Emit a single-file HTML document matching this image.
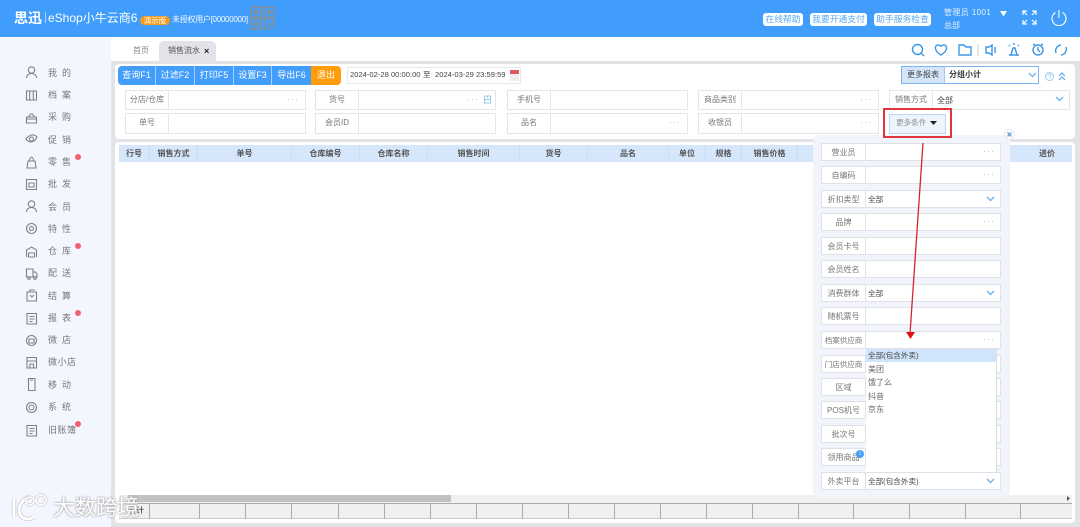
<!DOCTYPE html>
<html><head><meta charset="utf-8"><style>
*{margin:0;padding:0;box-sizing:border-box}
html,body{width:1080px;height:527px;overflow:hidden;background:#e2e3e6}
body{position:relative;font-family:"Liberation Sans","Noto Sans CJK SC",sans-serif;font-size:8px;color:#666;filter:blur(.35px)}
div,span.a,svg{position:absolute}
.t{white-space:nowrap;line-height:12px}
.c{text-align:center}
.nav{left:48px;color:#777;font-size:9px;letter-spacing:5px;white-space:nowrap;line-height:12px}
.dot{width:6px;height:6px;border-radius:50%;background:#f0626f}
.ic{left:24px;width:15px;height:15px;fill:none;stroke:#808088;stroke-width:1.1}
.b{top:66px;height:19px;color:#fff;font-size:9px;line-height:19px;text-align:center;background:#429dfb;border-right:1px solid #a6cff8}
.f{height:20px;background:#fff;border:1px solid #e3e5e8}
.f .l{left:0;top:0;bottom:0;width:43px;border-right:1px solid #e3e5e8;text-align:center;line-height:18px;color:#777}
.f .v{left:47px;top:0;line-height:19px;color:#444}
.f .d{right:6px;top:0;line-height:17px;color:#9cc9e8;font-size:9px;letter-spacing:1px}
.ch{right:5px;top:5px;width:9px;height:6px;fill:none;stroke:#72b7ee;stroke-width:1.5}
.h{top:145px;height:17px;line-height:17px;font-size:8px;font-weight:bold;color:#555;text-align:center;border-right:1px solid #c9dcf5}
.g{left:821px;width:180px;height:18px;background:#fff;border:1px solid #dfe1e8}
.g .l{left:0;top:0;bottom:0;width:44px;border-right:1px solid #dfe1e8;text-align:center;line-height:17px;color:#777;white-space:nowrap}
.g .v{left:46px;top:0;line-height:17px;color:#444;font-size:7.6px;white-space:nowrap}
.g .d{right:5px;top:0;line-height:15px;color:#9cc9e8;font-size:9px;letter-spacing:1px}
.q{fill:none;stroke:#3e97e6;stroke-width:1.4}
.ft{top:504px;height:15px;border-right:1px solid #aaa}
</style></head><body>
<div style="left:0;top:0;width:1080px;height:37px;background:#419dfb"></div>
<div class="t" style="left:14px;top:10px;color:#fff;font-size:14px;font-weight:bold;line-height:16px">思迅</div>
<div style="left:45px;top:12px;width:1px;height:11px;background:#a9d2fb"></div>
<div class="t" style="left:48px;top:10px;color:#fff;font-size:12px;line-height:16px">eShop小牛云商6</div>
<div class="t c" style="left:140px;top:16px;width:30px;height:9px;border-radius:5px;background:#f49a1c;color:#fff;font-size:7.500px;line-height:9px">演示版</div>
<div class="t" style="left:172px;top:14px;color:#f0f7ff;font-size:8px;letter-spacing:-.28px">未授权用户[00000000]</div>
<svg style="left:250px;top:6px" width="25" height="24" fill="none" stroke="#84929a" stroke-width="1.6"><rect x="1" y="1" width="10" height="10"/><rect x="14" y="1" width="10" height="10"/><rect x="1" y="13" width="10" height="10"/><path d="M14 13h10v5h-5v5h-5zM24 20v3"/><rect x="4.500" y="4.500" width="3" height="3" fill="#84929a"/><rect x="17.500" y="4.500" width="3" height="3" fill="#84929a"/><rect x="4.500" y="16.500" width="3" height="3" fill="#84929a"/></svg>
<div class="t c" style="left:763px;top:13px;width:40px;height:13px;background:#fff;border-radius:3px;color:#5aaaf5;font-size:8.800px;line-height:13px">在线帮助</div>
<div class="t c" style="left:810px;top:13px;width:57px;height:13px;background:#fff;border-radius:3px;color:#5aaaf5;font-size:8.800px;line-height:13px">我要开通支付</div>
<div class="t c" style="left:874px;top:13px;width:57px;height:13px;background:#fff;border-radius:3px;color:#5aaaf5;font-size:8.800px;line-height:13px">助手服务检查</div>
<div class="t" style="left:944px;top:7px;color:#e6f2ff;font-size:8px;letter-spacing:.4px">管理员 1001</div>
<div class="t" style="left:944px;top:20px;color:#e6f2ff;font-size:8px">总部</div>
<svg style="left:999px;top:10px" width="9" height="7"><path d="M1 1h7L4.500 6.500z" fill="#fff"/></svg>
<svg style="left:1022px;top:10px" width="15" height="15" fill="none" stroke="#fff" stroke-width="1.2"><path d="M1 5V1h4M1 1l4 4M10 1h4v4M14 1l-4 4M1 10v4h4M1 14l4-4M14 10v4h-4M14 14l-4-4"/></svg>
<svg style="left:1051px;top:9px" width="16" height="17" fill="none" stroke="#fff" stroke-width="1.1"><path d="M4.500 3.500A7 7 0 1 0 11.500 3.500M8 1v8"/></svg>

<div style="left:0;top:37px;width:111px;height:490px;background:#f4f6ff"></div>
<div style="left:111px;top:37px;width:969px;height:24px;background:#fff"></div>
<div class="t c" style="left:130px;top:45px;width:22px;color:#888">首页</div>
<div style="left:159px;top:41px;width:57px;height:20px;background:#e2e3e8;border-radius:5px 5px 0 0"></div>
<div class="t" style="left:168px;top:45px;color:#555">销售流水</div>
<div class="t" style="left:204px;top:45px;color:#222;font-size:9px;font-weight:bold">×</div>
<svg style="left:910px;top:42px" width="160" height="16"><g class="q"><circle cx="7.500" cy="7.500" r="5"/><path d="M11 11l3 3"/><path d="M31 13c-8-5-6-10-3-10 2 0 3 1 3 2 0-1 1-2 3-2 3 0 5 5-3 10z"/><path d="M49 13V3h5l2 2h5v8z"/><path d="M76 5h3l3-2v10l-3-2h-3zM85 5v6"/><path d="M99 13h10M101 13l2-7h2l2 7M104 1v2M99 3l1 1M109 3l-1 1"/><circle cx="128" cy="8" r="5"/><path d="M128 5v3l2 2M123 3l2-1M133 3l-2-1"/><path d="M146 11a6 6 0 0 1 5-8M156 5a6 6 0 0 1-5 8"/></g><path d="M68 2v12" stroke="#ccc" fill="none"/></svg>

<div style="left:115px;top:64px;width:960px;height:75px;background:#fff;border-radius:4px"></div>
<div style="left:115px;top:142px;width:960px;height:381px;background:#fff;border-radius:4px"></div>
<div class="b" style="left:118px;width:38px;border-radius:4px 0 0 4px">查询F1</div>
<div class="b" style="left:156px;width:39px">过滤F2</div>
<div class="b" style="left:195px;width:39px">打印F5</div>
<div class="b" style="left:234px;width:38px">设置F3</div>
<div class="b" style="left:272px;width:39px;border:0">导出F6</div>
<div class="b" style="left:311px;width:30px;background:#ff9d0b;border:0;border-radius:0 4px 4px 0">退出</div>
<div style="left:347px;top:67px;width:174px;height:17px;border:1px solid #e6e8ea"></div>
<div class="t" style="left:350px;top:69px;color:#444;font-size:7.600px">2024-02-28 00:00:00</div>
<div class="t" style="left:423px;top:69px;color:#444;font-size:7.600px">至</div>
<div class="t" style="left:435px;top:69px;color:#444;font-size:7.600px">2024-03-29 23:59:59</div>
<div style="left:510px;top:70px;width:9px;height:11px;background:#eee;border-top:4px solid #e25757"></div>

<div style="left:901px;top:66px;width:138px;height:18px;border:1px solid #7fb5ef;background:#fff"></div>
<div class="t c" style="left:902px;top:67px;width:43px;height:16px;background:#d5e6fb;line-height:16px;border-right:1px solid #a8c8ee;color:#444">更多报表</div>
<div class="t" style="left:949px;top:69px;color:#333;font-weight:bold">分组小计</div>
<svg style="left:1028px;top:72px" width="9" height="6" fill="none" stroke="#72b7ee" stroke-width="1.4"><path d="M1 1l3.500 3.500L8 1"/></svg>
<svg style="left:1044px;top:71px" width="24" height="11" fill="none" stroke="#9cc9ee"><circle cx="5.500" cy="5.500" r="4"/><path d="M4 4.500c0-2 3-2 3 0 0 1-1.500 1-1.500 2.500" stroke-width=".8"/><path d="M15 5l3-3 3 3M15 9l3-3 3 3" stroke="#62a9e8" stroke-width="1.2"/></svg>

<div class="f" style="left:125px;top:90px;width:181px"><div class="l">分店/仓库</div><div class="d">···</div></div>
<div class="f" style="left:315px;top:90px;width:181px"><div class="l">货号</div><div class="d" style="right:16px">···</div><svg style="left:167px;top:4px" width="9" height="9" fill="none" stroke="#9cc9e8"><path d="M1.500 1h6v7h-6zM1.500 4.500h6M4.500 1v2"/></svg></div>
<div class="f" style="left:507px;top:90px;width:181px"><div class="l">手机号</div></div>
<div class="f" style="left:698px;top:90px;width:181px"><div class="l">商品类别</div><div class="d">···</div></div>
<div class="f" style="left:889px;top:90px;width:181px"><div class="l">销售方式</div><div class="v">全部</div><svg class="ch"><path d="M1 1l3.500 3.500L8 1"/></svg></div>
<div class="f" style="left:125px;top:113px;width:181px;height:21px"><div class="l">单号</div></div>
<div class="f" style="left:315px;top:113px;width:181px;height:21px"><div class="l">会员ID</div></div>
<div class="f" style="left:507px;top:113px;width:181px;height:21px"><div class="l">品名</div><div class="d">···</div></div>
<div class="f" style="left:698px;top:113px;width:181px;height:21px"><div class="l">收银员</div><div class="d">···</div></div>
<div class="t" style="left:889px;top:114px;width:57px;height:20px;background:#eef4fc;border:1px solid #bcd5f0;line-height:16px;padding-left:6px;color:#8a8f98;font-size:7.600px">更多条件</div>
<svg style="left:930px;top:121px" width="7" height="5"><path d="M0 0h7L3.500 4z" fill="#222"/></svg>

<div style="left:119px;top:145px;width:953px;height:17px;background:#d6e6fb"></div>
<div class="h" style="left:119px;width:31px">行号</div>
<div class="h" style="left:150px;width:48px">销售方式</div>
<div class="h" style="left:198px;width:94px">单号</div>
<div class="h" style="left:292px;width:68px">仓库编号</div>
<div class="h" style="left:360px;width:68px">仓库名称</div>
<div class="h" style="left:428px;width:92px">销售时间</div>
<div class="h" style="left:520px;width:68px">货号</div>
<div class="h" style="left:588px;width:81px">品名</div>
<div class="h" style="left:669px;width:37px">单位</div>
<div class="h" style="left:706px;width:36px">规格</div>
<div class="h" style="left:742px;width:56px">销售价格</div>
<div class="h" style="left:1022px;width:50px;border:0">进价</div>

<div style="left:119px;top:495px;width:953px;height:8px;background:#f0f0f0"></div>
<div style="left:128px;top:495px;width:323px;height:7px;background:#c2c2c2"></div>
<svg style="left:1066px;top:495px" width="5" height="7"><path d="M1 1l3 2.500L1 6z" fill="#555"/></svg>
<div style="left:119px;top:503px;width:953px;height:16px;background:#f0f0f0;border-top:1px solid #aaa;border-bottom:1px solid #ccc"></div>
<div class="ft" style="left:119px;width:31px"></div>
<div class="ft" style="left:150px;width:50px"></div>
<div class="ft" style="left:200px;width:46px"></div>
<div class="ft" style="left:246px;width:46px"></div>
<div class="ft" style="left:292px;width:47px"></div>
<div class="ft" style="left:339px;width:46px"></div>
<div class="ft" style="left:385px;width:46px"></div>
<div class="ft" style="left:431px;width:46px"></div>
<div class="ft" style="left:477px;width:46px"></div>
<div class="ft" style="left:523px;width:46px"></div>
<div class="ft" style="left:569px;width:46px"></div>
<div class="ft" style="left:615px;width:46px"></div>
<div class="ft" style="left:661px;width:46px"></div>
<div class="ft" style="left:707px;width:46px"></div>
<div class="ft" style="left:753px;width:46px"></div>
<div class="ft" style="left:799px;width:55px"></div>
<div class="ft" style="left:854px;width:56px"></div>
<div class="ft" style="left:910px;width:56px"></div>
<div class="ft" style="left:966px;width:55px"></div>
<div class="t" style="left:128px;top:505px;color:#222">合计</div>

<div style="left:813px;top:135px;width:197px;height:362px;background:#f2f4fc;border-radius:6px"></div>
<div class="g" style="top:143px"><div class="l">营业员</div><div class="d">···</div></div>
<div class="g" style="top:166px"><div class="l">自编码</div><div class="d">···</div></div>
<div class="g" style="top:190px"><div class="l">折扣类型</div><div class="v">全部</div><svg class="ch"><path d="M1 1l3.500 3.500L8 1"/></svg></div>
<div class="g" style="top:213px"><div class="l">品牌</div><div class="d">···</div></div>
<div class="g" style="top:237px"><div class="l">会员卡号</div></div>
<div class="g" style="top:260px"><div class="l">会员姓名</div></div>
<div class="g" style="top:284px"><div class="l">消费群体</div><div class="v">全部</div><svg class="ch"><path d="M1 1l3.500 3.500L8 1"/></svg></div>
<div class="g" style="top:307px"><div class="l">随机票号</div></div>
<div class="g" style="top:331px"><div class="l" style="font-size:7.500px">档案供应商</div><div class="d">···</div></div>
<div class="g" style="top:355px"><div class="l" style="font-size:7.500px">门店供应商</div></div>
<div class="g" style="top:378px"><div class="l">区域</div></div>
<div class="g" style="top:401px"><div class="l">POS机号</div></div>
<div class="g" style="top:425px"><div class="l">批次号</div></div>
<div class="g" style="top:448px"><div class="l">领用商品</div></div>
<div class="g" style="top:472px"><div class="l">外卖平台</div><div class="v">全部(包含外卖)</div><svg class="ch"><path d="M1 1l3.500 3.500L8 1"/></svg></div>
<div class="c" style="left:856px;top:450px;width:8px;height:8px;border-radius:50%;background:#429dfb;color:#fff;font-size:6px;line-height:8px">i</div>
<div style="left:866px;top:349px;width:131px;height:123px;background:#fff;border-right:1px solid #ddd"></div>
<div class="t" style="left:866px;top:349px;width:130px;height:13px;background:#cfe5fb;padding-left:2px;color:#444;line-height:13px;font-size:7.600px">全部(包含外卖)</div>
<div class="t" style="left:868px;top:363px;line-height:13px">美团</div>
<div class="t" style="left:868px;top:376px;line-height:13px">饿了么</div>
<div class="t" style="left:868px;top:390px;line-height:13px">抖音</div>
<div class="t" style="left:868px;top:403px;line-height:13px">京东</div>
<div style="left:1004px;top:129px;width:11px;height:11px;border-radius:50%;background:#fff;border:1px solid #e6e8ee"></div>
<svg style="left:1007px;top:132px" width="5" height="5" fill="none" stroke="#5f9fd8" stroke-width="1.3"><path d="M.5 .5l4 4M4.500 .5l-4 4"/></svg>

<div style="left:883px;top:108px;width:69px;height:30px;border:2px solid #e0353a"></div>
<svg style="left:900px;top:140px" width="30" height="200"><path d="M23 3L10 194" stroke="#d8232a" stroke-width="1.300" fill="none"/><path d="M6 192h9l-4.500 7z" fill="#e01218"/></svg>

<svg class="ic" style="top:65px"><circle cx="7.500" cy="5" r="3.200"/><path d="M2.500 13c0-6 10-6 10 0"/></svg><div class="nav" style="top:67px">我的</div>
<svg class="ic" style="top:88px"><path d="M2.500 3h10v9h-10zM5.700 3v9M9.300 3v9"/></svg><div class="nav" style="top:89px">档案</div>
<svg class="ic" style="top:110px"><path d="M2.500 7h10v6h-10zM2.500 9h10M4.500 7l2-3h2l2 3"/></svg><div class="nav" style="top:111px">采购</div>
<svg class="ic" style="top:132px"><path d="M2 7c4-5 8-5 11-2-2 5-7 7-11 2z"/><circle cx="7.500" cy="7" r="2"/></svg><div class="nav" style="top:134px">促销</div>
<svg class="ic" style="top:155px"><path d="M3 13l1-7h7l1 7zM5.500 6c0-5 4-5 4 0"/></svg><div class="nav" style="top:156px">零售</div><div class="dot" style="left:75px;top:154px"></div>
<svg class="ic" style="top:177px"><path d="M2.500 2.500h10v10h-10zM5 6h5v4H5z"/></svg><div class="nav" style="top:178px">批发</div>
<svg class="ic" style="top:199px"><circle cx="7.500" cy="5" r="3.200"/><path d="M2.500 13c0-6 10-6 10 0"/></svg><div class="nav" style="top:201px">会员</div>
<svg class="ic" style="top:221px"><circle cx="7.500" cy="7.500" r="5"/><circle cx="7.500" cy="7.500" r="2"/></svg><div class="nav" style="top:223px">特性</div>
<svg class="ic" style="top:244px"><path d="M2.500 13V6l5-3 5 3v7M4.500 9h6v4h-6z"/></svg><div class="nav" style="top:245px">仓库</div><div class="dot" style="left:75px;top:243px"></div>
<svg class="ic" style="top:266px"><path d="M2.500 3h6.500v8h-6.500zM9 6h2.500l1.500 2v3H9"/><circle cx="5" cy="12" r="1.300"/><circle cx="11" cy="12" r="1.300"/></svg><div class="nav" style="top:267px">配送</div>
<svg class="ic" style="top:288px"><path d="M3 4h9.500v9H3zM5 4l1-2h5M6 7l2 2 2-2"/></svg><div class="nav" style="top:290px">结算</div>
<svg class="ic" style="top:311px"><path d="M3 2.500h9.500v10.500H3zM5.500 5.500h5M5.500 8h5M5.500 10.500h3"/></svg><div class="nav" style="top:312px">报表</div><div class="dot" style="left:75px;top:310px"></div>
<svg class="ic" style="top:333px"><circle cx="7.500" cy="7.500" r="5"/><path d="M5 6h5v4H5z"/></svg><div class="nav" style="top:334px">微店</div>
<svg class="ic" style="top:355px"><path d="M3 2.500h9.500v10.500H3zM3 6h9.500M6 13V9h3.500v4"/></svg><div class="nav" style="top:356px;letter-spacing:.5px">微小店</div>
<svg class="ic" style="top:377px"><path d="M4.500 1.500h6.500v12H4.500zM6 3h3"/></svg><div class="nav" style="top:379px">移动</div>
<svg class="ic" style="top:400px"><circle cx="7.500" cy="7.500" r="5"/><circle cx="7.500" cy="7.500" r="2.500"/></svg><div class="nav" style="top:401px">系统</div>
<svg class="ic" style="top:423px"><path d="M3 2.500h9.500v10.500H3zM5.500 5.500h5M5.500 8h5M5.500 10.500h3"/></svg><div class="nav" style="top:424px;letter-spacing:.5px">旧账簿</div><div class="dot" style="left:75px;top:421px"></div>

<svg style="left:8px;top:493px" width="44" height="30" fill="none"><g stroke="#cfcfd4" stroke-width="4.500"><path d="M6 6v18M21 4C8 9 8 26 20 26c2 0 4-.5 5-2"/></g><g stroke="#fff" stroke-width="2.800"><path d="M6 6v18M21 4C8 9 8 26 20 26c2 0 4-.5 5-2"/></g><g stroke="#cfcfd4" stroke-width="3"><circle cx="22" cy="8" r="4"/><circle cx="33" cy="7" r="5"/></g><g stroke="#fff" stroke-width="1.600"><circle cx="22" cy="8" r="4"/><circle cx="33" cy="7" r="5"/></g></svg>
<div class="t" style="left:53px;top:495px;color:#fff;font-size:21.500px;line-height:26px;text-shadow:0 0 2px #aaa,0 0 2px #aaa">大数跨境</div>
</body></html>
